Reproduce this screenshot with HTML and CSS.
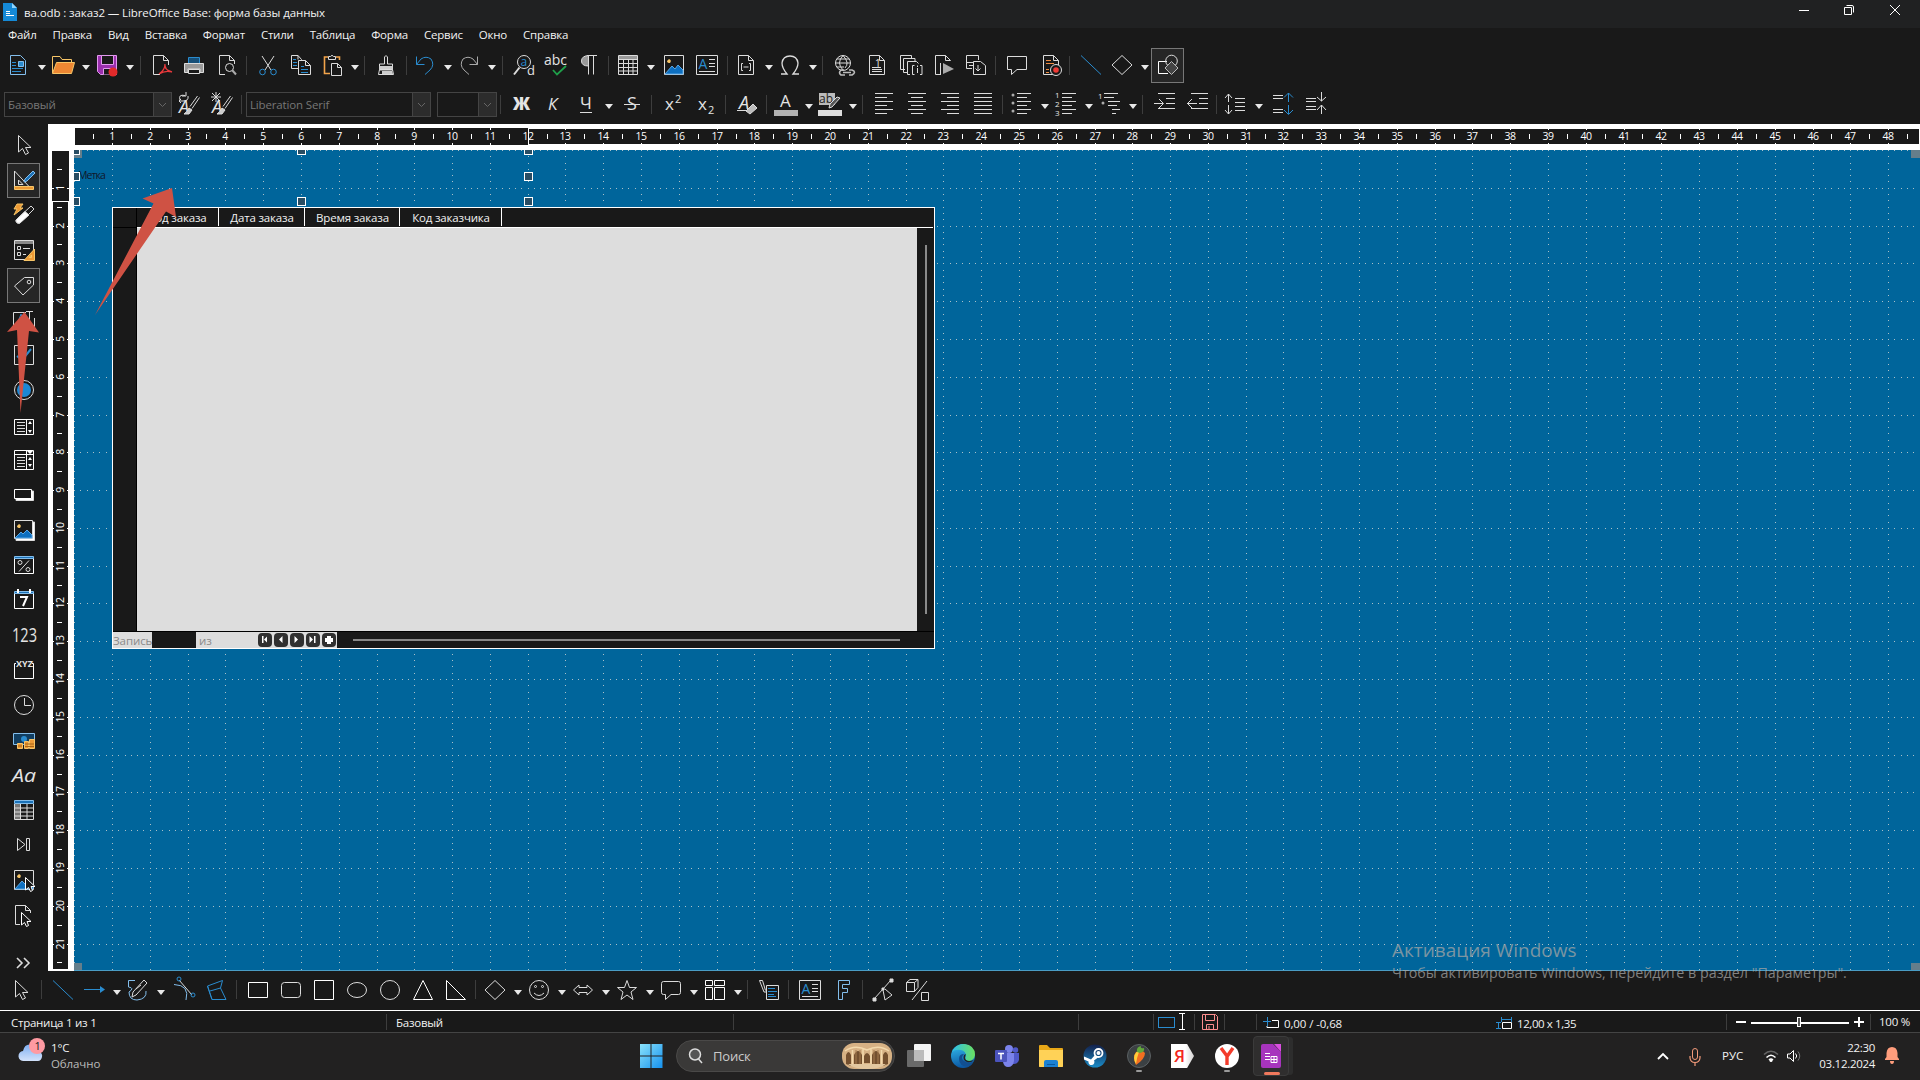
FILE: index.html
```html
<!DOCTYPE html>
<html lang="ru">
<head>
<meta charset="utf-8">
<title>ва.odb : заказ2 — LibreOffice Base: форма базы данных</title>
<link rel="stylesheet" href="styles.css">
</head>
<body>
<header class="titlebar">
  <svg class="app-icon" viewBox="0 0 14 18"><path d="M0 0H9L14 5V18H0Z" fill="#1589d6"/><path d="M9 0V5H14Z" fill="#8fd6ff"/><path d="M3 8.500H7M3 10.500H7M3 12.500H11" stroke="#fff"/></svg>
  <span class="title">ва.odb : заказ2 — LibreOffice Base: форма базы данных</span>
  <svg class="win-controls" viewBox="0 0 110 28" fill="none" stroke="#fff"><path d="M4 10.500H14"/><path d="M49.500 7.500H56.500V14.500H49.500ZM51.500 5.500H57Q58.500 5.500 58.500 7V12.500"/><path d="M95 5L105 15M105 5L95 15"/></svg>
</header>
<nav class="menubar">
  <span>Файл</span><span>Правка</span><span>Вид</span><span>Вставка</span><span>Формат</span><span>Стили</span><span>Таблица</span><span>Форма</span><span>Сервис</span><span>Окно</span><span>Справка</span>
</nav>
<div class="toolbar standard" id="standard"></div>
<div class="toolbar formatting" id="formatting"></div>
<main class="workspace">
  <aside class="sidebar" id="sidebar"></aside>
  <section class="editor">
    <svg class="ruler-h" id="rulerH" width="1872" height="26"></svg>
    <div class="editor-row">
      <svg class="ruler-v" id="rulerV" width="26" height="821"></svg>
      <div class="canvas">
        <svg class="dots" width="1846" height="821"><path id="dots"/></svg>
        <span class="label-control">Метка</span>
        <div class="form-grid">
          <div class="grid-head"><i></i><b>Код заказа</b><b>Дата заказа</b><b>Время заказа</b><b>Код заказчика</b></div>
          <div class="grid-body"><div class="row-heads"></div><div class="rows"></div><div class="vscroll"></div></div>
          <div class="grid-foot"><span class="rec">Запись</span><span class="rec-no"></span><span class="of">из</span>
            <svg class="rec-nav" width="80" height="16"><g fill="#303030"><rect x="1" y="1" width="14" height="14" rx="4"/><rect x="17" y="1" width="14" height="14" rx="4"/><rect x="33" y="1" width="14" height="14" rx="4"/><rect x="49" y="1" width="14" height="14" rx="4"/><rect x="65" y="1" width="14" height="14" rx="4"/></g><g fill="#fff"><path d="M5 4H6.500V11H5ZM7 7.500L10 4.500V10.500ZM22 7.500L25.500 4V11ZM41 7.500L37.500 4V11ZM56 7.500L52.500 4V11ZM57 4H58.500V11H57ZM70 4H74V6H76V10H74V12H70V10H68V6H70Z"/></g></svg>
            <span class="hscroll"></span></div>
        </div>
        <svg class="handles" width="1846" height="821" id="handles"></svg>
      </div>
    </div>
  </section>
</main>
<div class="toolbar drawing" id="drawing"></div>
<footer class="statusbar" id="status">
  <span class="st page">Страница 1 из 1</span>
  <span class="st style">Базовый</span>
  <span class="st blank"></span>
  <span class="st lang"></span>
  <span class="st mode"><svg width="30" height="18" fill="none"><rect x="4.500" y="4.500" width="16" height="10" stroke="#2a8ccf"/><path d="M25 .5H31M25 16.500H31M28.500 1V16" stroke="#fff"/></svg></span>
  <span class="st modified"><svg width="16" height="16" fill="none" stroke="#ff8f8f"><path d="M.5 .5H13.500L15.500 2.500V15.500H.5ZM3.500 1V6.500H12.500V1M4.500 15V10.500H11.500V15M7 12V15"/></svg></span>
  <span class="st signature"></span>
  <span class="st gap"></span>
  <span class="st pos"><svg width="16" height="12" fill="none"><path d="M0 4.500H8M4.500 0V9" stroke="#2a8ccf"/><path d="M9 3.500H15.500V10.500H4V9" stroke="#fff"/></svg>0,00 / -0,68</span>
  <span class="st size"><svg width="16" height="12" fill="none"><path d="M5.500 0V5M15.500 0V5M6 2.500H15M0 5.500H5M0 11.500H5M2.500 6V11" stroke="#2a8ccf"/><path d="M6.500 5.500H15.500V11.500H6.500Z" stroke="#fff"/></svg>12,00 x 1,35</span>
  <span class="st zoom"><svg width="130" height="16"><path d="M0 8H10M15 9H113M118 8H128M123 3V13" stroke="#fff" stroke-width="2"/><rect x="61.500" y="3.500" width="3" height="9" fill="#555" stroke="#fff"/></svg></span>
  <span class="st percent">100 %</span>
</footer>
<div class="taskbar">
  <svg class="weather" width="30" height="30"><defs><linearGradient id="cl" x2="0" y2="1"><stop stop-color="#7fb0f2"/><stop offset="1" stop-color="#d3e2fb"/></linearGradient></defs><path d="M6 24A5 5 0 0 1 5 14Q7 6 14 8Q19 9 20 14Q25 16 24 20Q23 24 20 24Z" fill="url(#cl)"/><circle cx="19" cy="9" r="8" fill="#ff9aa2"/><text x="16.500" y="13" font-size="11" fill="#222">1</text></svg>
  <div class="weather-text"><span>1°C</span><span class="dim">Облачно</span></div>
  <div class="apps">
    <svg class="start" width="24" height="24"><defs><linearGradient id="wn" x2="1" y2="1"><stop stop-color="#8be3fb"/><stop offset="1" stop-color="#1591ee"/></linearGradient></defs><path d="M1 0H11.500V11.500H1ZM12.500 0H23.500V11.500H12.500ZM1 12.500H11.500V24H1ZM12.500 12.500H23.500V24H12.500Z" fill="url(#wn)"/></svg>
    <div class="search"><svg width="18" height="18" fill="none" stroke="#ddd" stroke-width="1.500"><circle cx="9" cy="7.500" r="5.500" fill="#555"/><path d="M12.500 12L16 16"/></svg><span>Поиск</span>
      <svg class="arch" width="50" height="26" viewBox="0 0 50 26"><rect width="50" height="26" rx="12" fill="#d6b184"/><path d="M4 21V12Q6.500 6 9 12V23ZM12 24V12Q16 4 20 12V24ZM22 20V13Q25 7 28 13V20ZM30 24V12Q34 4 38 12V24ZM41 23V12Q43.500 6 46 12V21Z" fill="#74502f"/><path d="M3 8Q13 1 25 7Q37 1 47 8M10.500 7V22M21 6V22M29 6V22M39.500 7V22" stroke="#f3d9ac" stroke-width="1.500" fill="none"/><path d="M14 7V22M18 7V22M32 7V22M36 7V22" stroke="#a67c50" fill="none"/><path d="M6 21H44Q38 26 25 26Q12 26 6 21" fill="#e3c8a0"/></svg></div>
    <svg class="app" viewBox="0 0 24 24"><rect x="7" y="0" width="17" height="17" rx="1" fill="#f4f4f4"/><rect x="0" y="6" width="17" height="17" rx="1" fill="#777" opacity=".85"/><rect x="7" y="6" width="10" height="11" fill="#bbb"/></svg>
    <svg class="app" viewBox="0 0 24 24"><defs><linearGradient id="ed" y2="1" x2=".2"><stop stop-color="#35c1f1"/><stop offset="1" stop-color="#0c59a4"/></linearGradient><linearGradient id="ed2"><stop stop-color="#2ec0ea"/><stop offset="1" stop-color="#6be05f"/></linearGradient></defs><circle cx="12" cy="12" r="12" fill="url(#ed)"/><path d="M1 8Q5 0 13 0Q24 1 24 11Q23 17 17 17Q13 16 15 12Q15 7 10 6Q4 5 1 8Z" fill="url(#ed2)"/><path d="M13 10Q9 14 13 17Q18 20 22.500 17.500Q21 21 17 23Q8 22 8 15Q8 10 13 10Z" fill="#124f91"/><path d="M15 10Q13 14 15 16Q18 18 23 16Q20 19 16 18Q11 16 13 11Z" fill="#232323"/></svg>
    <svg class="app" viewBox="0 0 24 24"><circle cx="14" cy="5" r="4" fill="#7b83eb"/><circle cx="20.500" cy="6" r="2.800" fill="#5059c9"/><path d="M16 9H24V16Q23 20 19 20H16Z" fill="#5059c9"/><path d="M8 9H19V17Q18 23 13 23Q9 23 8 18Z" fill="#7b83eb"/><rect y="6" width="12" height="12" rx="1" fill="#4b53bc"/><path d="M3 9.500H9M6 9.500V15.500" stroke="#fff" stroke-width="1.500"/></svg>
    <svg class="app" viewBox="0 0 24 24"><path d="M0 2Q0 1 1 1H8L11 4H23Q24 4 24 5V22Q24 23 23 23H1Q0 23 0 22Z" fill="#e9a817"/><path d="M0 6H24V22Q24 23 23 23H1Q0 23 0 22Z" fill="#ffd257"/><path d="M5 23V18Q5 16 7 16H17Q19 16 19 18V23Z" fill="#1c81d2"/><path d="M8 20H16V21H8Z" fill="#0a5aa0"/></svg>
    <svg class="app" viewBox="0 0 24 24"><defs><linearGradient id="sm" y2="1" x2="0"><stop stop-color="#13204b"/><stop offset="1" stop-color="#1b8cc7"/></linearGradient></defs><circle cx="12" cy="12" r="11.500" fill="url(#sm)"/><circle cx="15.500" cy="9" r="4" fill="none" stroke="#fff" stroke-width="1.800"/><circle cx="15.500" cy="9" r="2" fill="#fff"/><path d="M1 12.500L8 15.500L12 11L15 13.500L11 16.500A3 3 0 1 1 5.500 17.500L1 15.500Z" fill="#fff"/></svg>
    <svg class="app on" viewBox="0 0 24 28"><circle cx="12" cy="12" r="11.500" fill="#3b4043" stroke="#5b6063"/><path d="M9 21Q5 13 9 8Q15 5 18 9Q18 15 9 21Z" fill="#f26f21"/><path d="M9 20Q5 13 9.500 8L12 8Q10 13 9 20" fill="#ffcf3a"/><path d="M10 8Q9 3 14 2Q13 5 17 4Q18 8 13 9Z" fill="#63a83b"/><rect x="9" y="26" width="6" height="2" rx="1" fill="#9a9a9a"/></svg>
    <div class="yandex"><span>Я</span></div>
    <svg class="app on" viewBox="0 0 24 28"><circle cx="12" cy="12" r="12" fill="#fff"/><path d="M6 4L12 12V21M18 4L12 12.500" stroke="#f33b2b" stroke-width="3.400" fill="none"/><rect x="9" y="26" width="6" height="2" rx="1" fill="#9a9a9a"/></svg>
    <div class="active-app"><svg width="20" height="24"><path d="M2 0H12L20 8V22Q20 24 18 24H2Q0 24 0 22V2Q0 0 2 0Z" fill="#a734bd"/><path d="M13 0H20V8Z" fill="#da4fe0"/><path d="M4 9.500H9M4 12.500H9M4 15.500H9M10 12.500H16V18.500H10ZM10 15.500H16M13 13V18" stroke="#fff" fill="none"/></svg></div>
  </div>
  <div class="tray">
    <svg width="190" height="32" fill="none"><path d="M8 19L13 14L18 19" stroke="#fff" stroke-width="1.800"/><rect x="42.500" y="8.500" width="5" height="11" rx="2.500" stroke="#f29a7a"/><path d="M40 16V18Q40.500 22.500 45 22.500Q49.500 22.500 50 18V16M45 23V26" stroke="#f29a7a" stroke-width="1.200"/><g stroke="#fff" stroke-width="1.500"><path d="M114 14.500Q121 8 128 14.500" stroke="#666"/><path d="M116.500 17.500Q121 13 125.500 17.500M119 20Q121 18 123 20"/></g><circle cx="121" cy="20.500" r="1.500" fill="#fff"/><path d="M137.500 14H140L143.500 10.500V21.500L140 18H137.500Z" stroke="#fff"/><path d="M145.500 13.500Q148 16 145.500 18.500" stroke="#fff"/><path d="M148 11.500Q151.500 16 148 20.500" stroke="#777"/></svg>
    <span class="lang-ind">РУС</span>
    <div class="clock"><span>22:30</span><span>03.12.2024</span></div>
    <svg class="bell" width="16" height="20"><path d="M1 14V13L2.500 11V7Q3 1 8 1Q13 1 13.500 7V11L15 13V14ZM6 15H10Q10 18 8 18Q6 18 6 15Z" fill="#ff9d7c"/></svg>
  </div>
</div>
<div class="watermark"><p class="wm-title">Активация Windows</p><p class="wm-text">Чтобы активировать Windows, перейдите в раздел "Параметры".</p></div>
<svg class="pointers" width="200" height="430"><g fill="#cf5244"><path d="M95 315L153.500 203.500L142.500 198.500L172 188L176 217L166 211.500Z"/><path d="M20.500 413L17 330L7 332L24.500 312L39 332.500L29 331Z"/></g></svg>
<script src="app.js"></script>
</body>
</html>
```
FILE: styles.css
```css
* { box-sizing: border-box; }
body { margin: 0; width: 1920px; height: 1080px; overflow: hidden; display: flex; flex-direction: column; background: #191919; color: #f2f2f2; font: 11.5px "Open Sans", "Noto Sans", sans-serif; position: relative; }
svg { display: block; flex: none; }
.titlebar { height: 28px; flex: none; background: #202122; display: flex; align-items: center; padding: 0 15px 4px 3px; }
.app-icon { width: 14px; height: 18px; }
.title { margin-left: 7px; white-space: nowrap; letter-spacing: -.1px; }
.win-controls { width: 110px; height: 28px; margin-left: auto; margin-top: 3px; }
.menubar { height: 19px; flex: none; display: flex; align-items: flex-start; line-height: 14px; gap: 16px; padding: 0 8px; letter-spacing: -.22px; }
.toolbar { display: flex; flex: none; align-items: center; }
.toolbar > * { flex: none; }
.standard { height: 36px; }
.formatting { height: 41px; padding-top: 1px; }
.drawing { height: 39px; padding-bottom: 2px; }
.icon { width: 24px; height: 24px; overflow: visible; fill: none; stroke: #dcdcdc; stroke-width: 1; }
.icon text { stroke: none; fill: #e4e4e4; }
.boxed { width: 33px; height: 35px; border: 1px solid #777; background: #262626; display: flex; align-items: center; justify-content: center; }
.sep { width: 1px; height: 19px; background: #3d3d3d; }
.dd { width: 8px; height: 10px; fill: #e8e8e8; }
.combo { height: 25px; border: 1px solid #444; display: flex; justify-content: space-between; color: #777; line-height: 23px; padding-left: 3px; background: #191919; letter-spacing: -.15px; }
.combo svg { width: 18px; height: 23px; background: #2c2c2c; border-left: 1px solid #444; fill: none; stroke: #666; }
.workspace { flex: none; height: 847px; display: flex; }
.sidebar { width: 48px; flex: none; display: flex; flex-direction: column; align-items: center; padding-right: 1px; }
.sidebar > * { flex: none; }
.editor { flex: 1; background: #fff; display: flex; flex-direction: column; }
.editor-row { display: flex; height: 821px; }
.ruler-num { fill: #fff; font-size: 10.5px; text-anchor: middle; letter-spacing: -.4px; }
.canvas { position: relative; flex: 1; background: #00659b; overflow: hidden; border-bottom: 1px solid #4a9cc4; }
.dots, .handles { position: absolute; left: 0; top: 0; }
.dots path { stroke: #a9c0c9; stroke-width: 1; shape-rendering: crispEdges; }
.label-control { position: absolute; left: 4px; top: 18px; font-size: 10.5px; letter-spacing: -.9px; color: #10162a; }
.form-grid { position: absolute; left: 38px; top: 57px; width: 823px; height: 442px; border: 1px solid #fff; background: #191919; display: flex; flex-direction: column; }
.grid-head { height: 20px; display: flex; border-bottom: 1px solid #fff; line-height: 20px; text-align: center; margin-right: 1px; }
.grid-head i { width: 24px; border-right: 1px solid #000; border-bottom: 1px solid #000; height: 20px; }
.grid-head b { font-weight: 400; border-right: 1px solid #fff; height: 18px; letter-spacing: -.18px; padding-left: 1px; }
.grid-head b:nth-child(2) { width: 82px; padding-left: 0; }
.grid-head b:nth-child(3) { width: 86px; }
.grid-head b:nth-child(4) { width: 95px; }
.grid-head b:nth-child(5) { width: 102px; }
.grid-body { flex: 1; display: flex; border-bottom: 1px solid #000; }
.row-heads { width: 24px; border-right: 1px solid #000; }
.rows { flex: 1; background: #ddd; }
.vscroll { width: 17px; position: relative; }
.vscroll::after { content: ""; display: block; width: 2px; height: 369px; background: #8a8a8a; margin: 17px 0 0 8px; }
.grid-foot { height: 16px; display: flex; background: #ddd; color: #8a8a8a; line-height: 17px; letter-spacing: -.1px; }
.rec { width: 39px; }
.rec-no { width: 44px; background: #191919; }
.of { width: 61px; padding-left: 3px; }
.hscroll { flex: 1; background: #191919; padding: 7px 34px 0 16px; }
.hscroll::after { content: ""; display: block; height: 2px; background: #8a8a8a; }
.statusbar { height: 23px; flex: none; border-top: 1px solid #fff; border-bottom: 1px solid #444; display: flex; align-items: center; letter-spacing: -.25px; }
.st { height: 16px; border-right: 1px solid #3d3d3d; display: flex; align-items: center; white-space: nowrap; }
.page { width: 387px; padding-left: 11px; padding-top: 1px; }
.style { width: 347px; padding-left: 9px; padding-top: 1px; }
.blank { width: 345px; }
.lang { width: 75px; }
.mode { width: 41px; }
.mode svg { overflow: visible; }
.modified { width: 30px; padding-left: 7px; }
.signature { width: 30px; border: 0; }
.gap { width: 2px; }
.pos { width: 239px; padding-left: 6px; gap: 5px; border: 0; padding-top: 3px; letter-spacing: -.1px; }
.size { width: 231px; gap: 5px; padding-top: 3px; letter-spacing: -.4px; }
.zoom { width: 144px; padding-left: 9px; }
.percent { border: 0; padding: 0 0 0 8px; }
.taskbar { height: 48px; flex: none; background: #222121; display: flex; align-items: flex-start; }
.weather { margin: 4px 0 0 18px; }
.weather-text { display: flex; flex-direction: column; line-height: 16px; margin: 7px 0 0 3px; width: 588px; letter-spacing: -.1px; }
.dim { color: #bbb; }
.apps { display: flex; align-items: center; height: 46px; width: 1011px; }
.search { width: 219px; height: 32px; border-radius: 16px; background: #3a3938; border: 1px solid #4a4948; margin: 0 12px 0 13px; display: flex; align-items: center; padding: 0 2px 0 9px; color: #ccc; font-size: 13px; gap: 9px; }
.search span { letter-spacing: -.2px; }
.arch { margin-left: auto; }
.app { width: 24px; height: 24px; margin-right: 20px; }
.on { height: 28px; margin-top: 4px; }
.yandex { width: 23px; height: 24px; margin-right: 21px; background: linear-gradient(90deg, #fff 62%, #d4d2d2); clip-path: polygon(0 0, 70% 0, 100% 50%, 70% 100%, 0 100%); color: #f3261b; font-size: 17px; font-weight: 600; line-height: 24px; padding-left: 3px; }
.active-app { width: 36px; height: 40px; background: #2f2e2e; border: 1px solid #3b3b3b; border-radius: 4px; margin-left: -6px; display: flex; align-items: center; justify-content: center; box-shadow: 5px 0 0 -1px #2d2d2d; position: relative; }
.active-app::after { content: ""; position: absolute; bottom: 0; left: 10px; width: 16px; height: 3px; border-radius: 2px; background: #f0795d; }
.tray { display: flex; position: relative; height: 46px; align-items: center; width: 250px; }
.lang-ind { position: absolute; left: 72px; top: 15px; }
.clock { display: flex; flex-direction: column; text-align: right; line-height: 16px; width: 67px; margin-left: -32px; letter-spacing: -.3px; }
.bell { margin-left: 9px; }
.watermark { position: absolute; left: 1392px; top: 937px; color: rgba(165,165,165,.75); white-space: nowrap; }
.watermark p { margin: 0; }
.wm-title { font-size: 19px; line-height: 27px; }
.wm-text { font-size: 14.300px; line-height: 17px; }
.pointers { position: absolute; left: 0; top: 0; }
```
FILE: app.js
```js
const page = '<path d="M4.500 2.500H14.500L19.500 7.500V21.500H4.500Z M14.500 2.500V7.500H19.500"/>';
const B = 'stroke="#2a8ccf"', L = 'stroke="#83beec"', O = 'fill="#ed9a36" stroke="#f7c567"';
const lines = (a) => `<path d="${a.map(([x, y, w]) => `M${x} ${y}.500h${w}`).join('')}"/>`;
const picture = '<path d="M2.500 2.500H21.500V21.500H2.500Z"/><path d="M3 21L10 13L13 16L16 12L21 17V21Z" fill="#0d6fc0" stroke="#58a6e4"/><path d="M7 6Q10 7 8 10Q5 10 5 8Z" fill="#f7c567" stroke="none"/>';
const cursor = 'M6.500 2.500V19L10.500 15.500L13.500 21.500L16.500 20L13.500 14.500H19Z';
const icons = {
  doc: `<path ${L} d="M3.500 2.500H13.500L18.500 7.500V21.500H3.500Z"/><path ${B} d="M5 9.500H9M5 12.500H9M5 15.500H16M5 18.500H14"/><path fill="#2a8ccf" stroke="#83beec" d="M11.500 8.500H16.500V13.500H11.500Z"/>`,
  open: `<path d="M1.500 20V3.500H9L11 6.500H20.500V9" stroke="#f7c567"/><path fill="#ed8733" stroke="#f7c567" d="M1.500 20.500L5.500 9.500H23.500L20.500 20.500Z"/>`,
  save: `<path d="M2.500 2.500H21.500V21.500H5.500L2.500 18.500Z" fill="#9b2fae" stroke="#e29aee"/><path fill="#191919" stroke="#e29aee" d="M6.500 2.500H18.500V11.500H6.500ZM8.500 21.500V15.500H17V21.500"/><circle cx="18" cy="19" r="4.500" fill="#e22a2a" stroke="none"/>`,
  pdf: `<path d="M3.500 2.500H13.500L18.500 7.500V12M3.500 2.500V21.500H10M13.500 2.500V7.500H18.500"/><path stroke="#e8393c" stroke-width="1.300" d="M9 21Q15 17 15 11Q14 17 22 19Q15 17 9 21"/>`,
  print: `<path ${B} fill="#164f78" d="M6.500 4.500H17.500V11H6.500Z"/><path fill="#999" stroke="#ddd" d="M2.500 10.500H21.500V19.500H18V16H6V19.500H2.500Z"/><path d="M6.500 16.500H17.500V20.500H6.500Z" fill="#191919"/>`,
  preview: `<path d="M9 21.500H3.500V2.500H13.500L18.500 7.500V11M13.500 2.500V7.500H18.500"/><circle cx="13.500" cy="14.500" r="4"/><path stroke-width="2" stroke="#aaa" d="M16.500 17.500L20 21.500"/>`,
  cut: `<path d="M6 3L15 17M18 3L9 17"/><g ${B}><circle cx="6.500" cy="19" r="2.800"/><circle cx="17.500" cy="19" r="2.800"/></g>`,
  copy: `<path d="M9 15.500H2.500V2.500H9L12.500 6.500V8M9 2.500V6.500"/><path d="M9.500 7.500H16.500L21.500 12.500V21.500H9.500ZM16.500 7.500V12.500H21.500"/><path ${B} d="M4 6.500H7M4 9.500H8M4 12.500H8M12 13.500H15M12 16.500H19M12 19.500H19"/>`,
  paste: `<path stroke="#f2a44b" stroke-width="1.600" d="M7 4H3.500V20.500H9M15 4H18.500V7"/><path d="M7.500 6.500V3.500H9.500Q11 1 12.500 3.500H14.500V6.500Z"/><path d="M10.500 10.500H16.500L20.500 14.500V22.500H10.500ZM16.500 10.500V14.500H20.500"/>`,
  brush: `<path d="M10.500 11V4Q12 1 13.500 4V11H18.500V16.500H5.500V11ZM5.500 16.500L4.500 21.500H19.500L18.500 16.500M5 17H19"/><path fill="#ccc" stroke="none" d="M5.500 13H18.500V16H5.500ZM8 18H18L19 21H8Z"/>`,
  undo: `<path ${B} d="M3.500 3.500V11.500H11.500M3.500 11.500L8 6Q13 2.500 18 6Q22 12 17 17L12 21.500"/>`,
  redo: `<path stroke="#aaa" d="M20.500 3.500V11.500H12.500M20.500 11.500L16 6Q11 2.500 6 6Q2 12 7 17L12 21.500"/>`,
  find: `<circle cx="12" cy="9" r="6.500"/><path stroke-width="2" d="M7.500 14.500L2 21.500"/><text x="8.500" y="13" font-size="12" style="fill:#2a8ccf">a</text><text x="15" y="22" font-size="13">d</text>`,
  abc: `<text x="0" y="12" font-size="14" textLength="23">abc</text><path stroke="#1fa04a" stroke-width="1.800" d="M9 17L13 21.500L22 13"/>`,
  pilcrow: `<path d="M11 2.500H21M12.500 3V21.500M17.500 3V21.500"/><path fill="#999" d="M12.500 3V13Q5.500 13 5.500 8Q5.500 3 12.500 2.500Z"/>`,
  table: `<path d="M2.500 2.500H21.500V21.500H2.500ZM2.500 6.500H21.500M2.500 10.500H21.500M2.500 14.500H21.500M2.500 18H21.500M7.500 6V21M12.500 6V21M17 6V21"/><path fill="#999" stroke="none" d="M3 3H21V6H3Z"/>`,
  picture,
  textbox: `<path d="M1.500 2.500H22.500V21.500H1.500Z"/><text x="3.500" y="16" font-size="14" style="fill:#2a8ccf">A</text>` + lines([[14, 6, 6], [14, 10, 6], [14, 13, 6], [4, 18, 16]]),
  field: page + '<path d="M9 10.500H7.500V17.500H9M15 10.500H16.500V17.500H15M9.500 14H14.500"/>',
  omega: `<path stroke-width="1.300" d="M3 21H9Q4 15 4 10Q5 3 12 3Q19 3 20 10Q20 15 15 21H21"/>`,
  link: `<circle cx="11" cy="10" r="7.500"/><path d="M3.500 10H18.500M5 6H17M5 14H12M11 2.500Q4 10 11 17M11 2.500Q18 10 13 15"/><path stroke-width="1.600" stroke="#bbb" d="M13 22H9Q6 20 9 17H12M17 17H20Q25 19 20 22H17M11 19.500H19"/>`,
  footnote: page + '<text x="10" y="14" font-size="10">1</text>' + lines([[7, 14, 9], [7, 16, 10], [7, 18, 10]]),
  endnote: `<path d="M6 16.500H1.500V2.500H12.500V5M9 19.500H4.500V5.500H16V8M11 21.500H8.500V8.500H17.500L19.500 10.500"/><path d="M15.500 12.500H13.500V21.500H15.500M21 12.500H23V21.500H21M18.500 15V20M18.500 12.500V14"/>`,
  bookmark: `<path d="M9 21.500H4.500V2.500H14.500L19.500 7.500M14.500 2.500V7.500H19.500M9.500 10V22"/><path fill="#aaa" stroke="none" d="M12 10L23 16L12 21Z"/>`,
  crossref: `<path d="M8 15.500H2.500V2.500H14.500V7M2.500 9.500H9M9.500 8.500H16.500L21.500 12.500V21.500H9.500ZM14 12V17M11.500 15.500L14 18L16.500 15.500M5 12.500H10"/>`,
  comment: `<path d="M2.500 3.500H21.500V16.500H12L6.500 21.500V16.500H2.500Z"/>`,
  track: page + `<path stroke="#f08b40" d="M7 7.500H12M7 10.500H15M7 16.500H10M7 19.500H10"/><circle cx="17" cy="17" r="5.500" fill="#191919"/><circle cx="17" cy="17" r="2.800" fill="#ee3a35" stroke="none"/>`,
  line: `<path ${B} d="M2 2.500L22 21.500"/>`,
  diamond: '<path d="M12 2.500L22 12L12 21.500L2 12Z"/>',
  shapes: `<path stroke="#fff" d="M11 8.500H2.500V20.500H12"/><circle cx="15.500" cy="8" r="5.800"/><path fill="#444" stroke="#bbb" d="M15.500 8.500L22 15L15.500 21.500L9 15Z"/>`,
  restyle: `<path d="M3 8Q1 2 8 3.500M9 0V4H5M11 4Q12 9 6 9H2M4 7L2 9L4 11"/><text x="2" y="21" font-size="18" font-style="italic">A</text><path d="M22.500 5.500L15 16.500M20.500 4L13 14.500"/><path fill="#ccc" d="M12 16L15 18L12 22H7Q10 20 12 16Z"/>`,
  newstyle: `<path d="M6 0V10M1 5H11M2 1L10 9M10 1L2 9"/><text x="2" y="21" font-size="18" font-style="italic">A</text><path d="M22.500 5.500L15 16.500M20.500 4L13 14.500"/><path fill="#ccc" d="M12 16L15 18L12 22H7Q10 20 12 16Z"/>`,
  bold: '<text x="4" y="18" font-size="17" font-weight="800" textLength="17" lengthAdjust="spacingAndGlyphs">Ж</text>',
  italic: '<text x="6" y="18" font-size="17" font-style="italic">К</text>',
  under: '<text x="6" y="17" font-size="17">Ч</text><path d="M6 20.500H18"/>',
  strike: '<text x="7" y="18" font-size="18">S</text><path d="M4 12.500H20"/>',
  sup: '<text x="4" y="18" font-size="17">x</text><text x="14" y="11" font-size="11">2</text>',
  sub: '<text x="4" y="18" font-size="17">x</text><text x="14" y="22" font-size="11">2</text>',
  clear: '<text x="4" y="17" font-size="18" font-style="italic">A</text><path d="M2 18.500H11"/><path fill="#bbb" d="M18 12L22 16L15 22L11 19Z"/>',
  color: '<text x="6" y="15" font-size="17">A</text><path stroke="none" fill="#b2b2b2" d="M0 18H24V24H0Z"/>',
  hilite: '<path fill="#bbb" stroke="none" d="M1 1H17V13H1Z"/><text x="1" y="11" font-size="12" style="fill:#222">ab</text><path fill="#555" d="M22 6L14 15L11 16L12 12L19 5Z"/><path stroke="none" fill="#ddd" d="M0 18H24V24H0Z"/>',
  left: lines([[3, 1, 18], [3, 5, 12], [3, 9, 18], [3, 13, 12], [3, 17, 18], [3, 21, 12]]),
  center: lines([[3, 1, 18], [6, 5, 12], [3, 9, 18], [6, 13, 12], [3, 17, 18], [6, 21, 12]]),
  right: lines([[3, 1, 18], [9, 5, 12], [3, 9, 18], [9, 13, 12], [3, 17, 18], [9, 21, 12]]),
  justify: lines([[3, 1, 18], [3, 5, 18], [3, 9, 18], [3, 13, 18], [3, 17, 18], [3, 21, 18]]),
  bullets: lines([[8, 1, 14], [8, 5, 10], [8, 9, 14], [8, 13, 10], [8, 17, 14], [8, 21, 10]]) + '<g fill="#aaa" stroke="none"><circle cx="4" cy="3" r="1.500"/><circle cx="4" cy="11" r="1.500"/><circle cx="4" cy="19" r="1.500"/></g>',
  numbers: lines([[8, 1, 14], [8, 5, 10], [8, 9, 14], [8, 13, 10], [8, 17, 14], [8, 21, 10]]) + '<g font-size="8"><text x="1" y="6">1</text><text x="1" y="15">2</text><text x="1" y="24">3</text></g>',
  outline: lines([[6, 1, 14], [6, 5, 10], [10, 9, 12], [10, 13, 9], [14, 17, 8], [14, 21, 4]]) + '<text x="0" y="7" font-size="8">1</text><circle cx="5" cy="11" r="1.500" fill="#aaa" stroke="none"/>',
  indent: lines([[6, 1, 17], [14, 6, 9], [14, 11, 9], [6, 16, 17]]) + '<path d="M2 11.500H11M7 7L11.500 11.500L7 16"/>',
  outdent: lines([[6, 1, 17], [14, 6, 9], [14, 11, 9], [6, 16, 17]]) + '<path d="M2 11.500H12M7 7L2.500 11.500L7 16"/>',
  spacing: lines([[12, 6, 10], [12, 10, 10], [12, 14, 10], [12, 18, 10]]) + '<path d="M5.500 2V10M2 6L5.500 2L9 6M5.500 13V22M2 18L5.500 22L9 18"/>',
  parinc: lines([[2, 3, 10], [2, 6, 10], [2, 17, 10], [2, 20, 10]]) + `<path ${B} d="M17.500 1V10M13 5.500L17.500 1L22 5.500M17.500 13V22M13 18L17.500 22.500L22 18"/>`,
  pardec: lines([[2, 6, 10], [2, 9, 10], [2, 14, 10], [2, 17, 10]]) + '<path d="M17.500 0V9M13 5L17.500 9L22 5M17.500 13V22M13 18L17.500 13L22 18"/>',
  pointer: `<path d="${cursor}"/>`,
  design: `<path d="M2.500 2V18.500H18ZM6.500 11V15.500H11Z"/><path fill="#1c72b8" ${L} d="M21 2L23 4L15 12L12 13L13 10Z"/><path ${O} d="M2.500 17.500H21.500V20.500H2.500Z"/>`,
  wizard: `<path ${O} d="M5 2H11L8 6H11L2 13L5 7H2Z"/><path d="M19 4L22 7L8 21Q4 22 4 18Z"/><path fill="#fff" d="M13 9.500L17 13L8 21Q4 22 4 18Z"/>`,
  props: `<path d="M2.500 2.500H21.500V21.500H2.500Z"/><path fill="#888" stroke="none" d="M3 3H21V6H3Z"/><path d="M5.500 8.500H8.500V11.500H5.500ZM5.500 14.500H8.500V17.500H5.500ZM11 10.500H18M11 16.500H14"/><path ${O} d="M22.500 11V22.500H12ZM19.500 17V19.500H17Z"/>`,
  tag: `<path d="M2.500 12L12.500 3.500H21.500V11L11 21Z"/><circle cx="17" cy="8" r="1.800"/>`,
  edit: `<path d="M14 4.500H1.500V19.500H22.500V10M14 3.500H21M17.500 4V19M15 19.500H20"/><path ${B} d="M6 14L9 6L12 14"/>`,
  check: `<path d="M2.500 2.500H21.500V21.500H2.500Z"/><path ${B} stroke-width="2" d="M5 13L10 17L19 6"/>`,
  radio: `<circle cx="12" cy="12" r="9.500"/><circle cx="12" cy="12" r="7" fill="#1c88d4" stroke="none"/>`,
  list: '<path stroke="#fff" d="M2.500 4.500H21.500V19.500H2.500ZM14.500 4V20"/>' + lines([[5, 7, 8], [5, 10, 8], [5, 13, 8], [5, 16, 8]]) + '<path fill="#fff" stroke="none" d="M16 9L18 6L20 9ZM16 15H20L18 18Z"/>',
  combobox: '<path stroke="#fff" d="M2.500 2.500H21.500V21.500H2.500ZM14.500 2V21M2 6.500H21"/>' + lines([[5, 9, 8], [5, 12, 8], [5, 15, 8], [5, 18, 8]]) + '<path fill="#fff" stroke="none" d="M15 3H21L18 6ZM16 12L18 9L20 12ZM16 16H20L18 19Z"/>',
  button: '<path fill="#fff" d="M4 8H21.500V17.500H4Z"/><path fill="#191919" stroke="#fff" d="M2.500 6.500H19.500V15.500H2.500Z"/>',
  imgbutton: '<path fill="#fff" d="M4 4H22.500V22.500H4Z"/><path fill="#191919" d="M2.500 2.500H20.500V20.500H2.500Z"/><path fill="#0d6fc0" stroke="#58a6e4" d="M3 20L9 14L11 16L15 12L20 17V20Z"/><path d="M7 6Q10 7 8 10Q5 10 5 8Z" fill="#f7c567" stroke="none"/>',
  percent: `<path stroke="#fff" d="M2.500 5V20.500H21.500V5"/><path fill="#1c72b8" ${L} d="M2.500 3.500H21.500V5.500H2.500Z"/><path d="M7 18.500L17 7.500"/><circle cx="8" cy="9.500" r="2"/><circle cx="16" cy="16.500" r="2"/>`,
  date: `<path stroke="#fff" d="M2.500 5V21.500H21.500V5"/><path fill="#1c72b8" ${L} d="M2.500 4.500H21.500V6.500H2.500Z"/><path stroke="#fff" stroke-width="2" d="M6 2V6M18 2V6M8 10H15L11 19"/>`,
  num: '<text x="0" y="19" font-size="20" font-weight="400" textLength="25" lengthAdjust="spacingAndGlyphs">123</text>',
  pattern: '<path stroke="#fff" d="M4 6.500H2.500V21.500H21.500V6.500H20"/><text x="4" y="9.500" font-size="9" font-weight="700" textLength="17">XYZ</text>',
  clock: '<circle cx="12" cy="12" r="9.500"/><path d="M12.500 5V12.500H19"/>',
  money: `<path ${L} fill="#113e61" d="M1.500 4.500H22.500V15.500H1.500Z"/><circle cx="12" cy="10" r="3" fill="#2a8ccf" stroke="none"/><g ${O}><path d="M5.500 14.500H10.500V19.500H5.500ZM12.500 12.500H16.500V19.500H12.500ZM17.500 10.500H22.500V19.500H17.500Z"/></g><path stroke="#a66518" d="M6 17H10M13 15H22M13 17.500H22"/>`,
  aa: '<text x="0" y="18" font-size="18" font-weight="500" font-style="italic" textLength="24" lengthAdjust="spacingAndGlyphs">Aa</text>',
  gridctl: `<path fill="#777" stroke="none" d="M3 6H8V21H3Z"/><path d="M2.500 6V21.500H21.500V6M3 10H21M3 14H21M3 18H21M8.500 6V21M15 6V21"/><path fill="#1c72b8" ${L} d="M2.500 2.500H21.500V5.500H2.500Z"/>`,
  navbar: '<path d="M5.500 5.500L13 11.500L5.500 17.500ZM14.500 5.500H17.500V17.500H14.500Z"/>',
  imgctl: picture + '<path fill="#191919" stroke="#fff" d="M13.500 9.500V22L16.500 19.500L18.500 23.500L20.500 22.500L19 18.500H23Z"/>',
  filectl: `<path d="M8 21.500H3.500V2.500H13.500L18.500 7.500V10M13.500 2.500V7.500H18.500"/><path fill="#191919" stroke="#fff" d="M9.500 9.500V22L12.500 19.500L14.500 23.500L16.500 22.500L15 18.500H19Z"/>`,
  more: '<path stroke-width="1.600" d="M5 8L10 13L5 18M12 8L17 13L12 18"/>',
  arrow: `<path ${B} d="M2 11.500H21"/><path fill="#2a8ccf" stroke="none" d="M18 8L23 11.500L18 15Z"/>`,
  curve: `<path ${L} d="M9 2.500H2.500V9Q9 10 3 14Q3 22 11 22Q21 21 20 13"/><path d="M18 2L21 5L10 17L6 19L7 14Z M10 11L15 7"/>`,
  bezier: `<path ${L} d="M2 6.500Q18 7 14 22"/><path stroke="#ddd" d="M7 2L20 17"/><circle ${B} cx="7" cy="1" r="2"/><circle ${B} cx="21" cy="17" r="2"/>`,
  polygon: `<path ${B} d="M2.500 8L17.500 2.500L15.500 10L21 21.500H7ZM2.500 8L7 21.500M5 13L15.500 10"/>`,
  rect: '<path stroke="#fff" d="M2.500 4.500H21.500V19.500H2.500Z"/>',
  round: '<rect x="2.500" y="4.500" width="19" height="15" rx="3"/>',
  square: '<path stroke="#fff" d="M2.500 2.500H21.500V21.500H2.500Z"/>',
  ellipse: '<ellipse cx="12" cy="12" rx="9.500" ry="7.500"/>',
  circle: '<circle cx="12" cy="12" r="9.500"/>',
  tri: '<path stroke="#fff" d="M12 2.500L21.500 21.500H2.500Z"/>',
  rtri: '<path stroke="#fff" d="M2.500 2.500L21.500 21.500H2.500Z"/>',
  smile: '<circle cx="12" cy="12" r="9.500"/><path d="M7 15Q12 20 17 15"/><g><circle cx="8.500" cy="8.500" r="1"/><circle cx="15.500" cy="8.500" r="1"/></g>',
  dbl: '<path d="M2.500 12L8 7V9.500H16V7L21.500 12L16 17V14.500H8V17Z"/>',
  star: '<path d="M12 2.500L14.500 9.500H21.500L16 14L18 21.500L12 17L6 21.500L8 14L2.500 9.500H9.500Z"/>',
  callout: '<path d="M4.500 3.500H19.500Q21.500 3.500 21.500 5.500V14.500Q21.500 16.500 19.500 16.500H12L6.500 21.500V16.500H4.500Q2.500 16.500 2.500 14.500V5.500Q2.500 3.500 4.500 3.500Z"/>',
  flow: '<path stroke="#fff" d="M2.500 2.500H9.500V7.500H2.500ZM11.500 2.500H21.500V7.500H11.500ZM2.500 9.500H9.500V21.500H2.500ZM11.500 9.500H21.500V21.500H11.500Z"/>',
  callout2: `<path d="M2.500 2.500H5.500L8.500 12.500M2.500 2.500L7 14H9.500M9.500 7.500H21.500V21.500H9.500Z"/><path ${B} d="M11 10.500H18M11 13.500H20M11 16.500H17M11 18.500H19"/>`,
  fontwork: `<path ${L} d="M7.500 2.500H18.500V6.500H11.500V10.500H16.500V14.500H11.500V21.500H7.500Z"/>`,
  points: '<path d="M2 21L11 11L19 2M11 12L13 22L20 17L13 11"/><path fill="#ddd" d="M1 20H4V23H1ZM18 1H21V4H18ZM10 10H12V12H10Z"/>',
  extrude: '<path d="M1.500 4.500H9.500V13.500H1.500ZM1.500 4.500L5 1.500H13V9.500L9.500 13.500M9.500 4.500L13 1.500M7 22L22 3M16.500 14.500H23.500V22.500H16.500Z"/>'
};
const sizes = { sep: 1, dd: 8, comboStyle: 168, comboFont: 185, comboSize: 60 };
const chevron = '<svg viewBox="0 0 17 23"><path d="M5 10L8.500 13.500L12 10"/></svg>';
const combo = (w, t) => `<div class="combo" style="width:${w}px"><span>${t}</span>${chevron}</div>`;
function markup(name, boxed) {
  if (name === 'sep') return '<span class="sep"></span>';
  if (name === 'dd') return '<svg class="dd" viewBox="0 0 8 10"><path d="M0 5H8L4 10Z"/></svg>';
  if (name === 'comboStyle') return combo(168, 'Базовый');
  if (name === 'comboFont') return combo(185, 'Liberation Serif');
  if (name === 'comboSize') return combo(60, '');
  const svg = `<svg class="icon" viewBox="0 0 24 24">${icons[name]}</svg>`;
  return boxed ? `<div class="boxed">${svg}</div>` : svg;
}
// Each entry is "name centre"; a leading "*" marks a pressed button.
function build(id, spec, vertical, start = 0) {
  const host = document.getElementById(id);
  let edge = start;
  for (const item of spec.split(',')) {
    let [name, c] = item.trim().split(' ');
    const boxed = name[0] === '*';
    if (boxed) name = name.slice(1);
    const w = boxed ? (vertical ? 35 : 33) : sizes[name] || 24;
    const from = Math.round(c - w / 2);
    host.insertAdjacentHTML('beforeend', markup(name, boxed));
    host.lastElementChild.style[vertical ? 'marginTop' : 'marginLeft'] = from - edge + 'px';
    edge = from + w;
  }
}
build('standard', 'doc 19,dd 42,open 63,dd 86,save 107,dd 130,sep 140,pdf 162,print 194,preview 228,sep 246,cut 268,copy 301,paste 333,dd 355,sep 364,brush 386,sep 406,undo 425,dd 448,redo 469,dd 492,sep 502,find 524,abc 556,pilcrow 588,sep 608,table 628,dd 651,picture 674,textbox 707,sep 727,field 746,dd 769,omega 790,dd 813,sep 822,link 844,footnote 877,endnote 911,bookmark 943,crossref 976,sep 995,comment 1017,track 1051,sep 1069,line 1091,diamond 1122,dd 1145,*shapes 1167');
build('formatting', 'comboStyle 88,restyle 189,newstyle 222,sep 241,comboFont 338,comboSize 467,sep 500,bold 521,italic 554,under 586,dd 609,strike 632,sep 651,sup 673,sub 706,sep 725,clear 747,sep 766,color 786,dd 809,hilite 830,dd 853,sep 862,left 884,center 917,right 950,justify 983,sep 1002,bullets 1021,dd 1045,numbers 1066,dd 1089,outline 1110,dd 1133,sep 1142,indent 1164,outdent 1197,sep 1216,spacing 1235,dd 1259,parinc 1283,pardec 1316');
build('sidebar', 'pointer 145,*design 180.5,wizard 214,props 250,*tag 285.5,edit 320,check 355,radio 390,list 427,combobox 460,button 495,imgbutton 530,percent 565,date 599,num 635,pattern 669,clock 705,money 741,aa 776,gridctl 810,navbar 845,imgctl 880,filectl 915,more 962', true, 124);
build('drawing', 'pointer 21,sep 41,line 63,arrow 94,dd 117,curve 138,dd 161,bezier 184,polygon 217,sep 236,rect 258,round 291,square 324,ellipse 357,circle 390,tri 423,rtri 456,sep 475,diamond 495,dd 518,smile 539,dd 562,dbl 583,dd 606,star 627,dd 650,callout 671,dd 694,flow 715,dd 738,sep 747,callout2 769,sep 788,textbox 810,fontwork 843,sep 862,points 884,extrude 917');

const CM = 37.79;
let h = '<path fill="#191919" d="M27 4H480V21H27ZM481 5H1871V20H481Z"/>', ticks = '', nums = '';
for (let i = 0; i <= 48; i++) {
  const x = Math.round(26.2 + i * CM), m = Math.round(26.2 + (i + .5) * CM);
  ticks += `M${m + .5} 10v5`;
  if (i) { ticks += `M${x + .5} 4v2M${x + .5} 19v2`; nums += `<text class="ruler-num" x="${x}" y="15.500">${i}</text>`; }
}
document.getElementById('rulerH').innerHTML = h + `<path stroke="#fff" d="${ticks}"/>` + nums;
let v = '<path fill="#191919" d="M4 1H21V51H4ZM5 52H20V819H5Z"/>';
ticks = ''; nums = '';
for (let i = 0; i <= 21; i++) {
  const y = Math.round(i * CM), m = Math.round((i + .5) * CM);
  ticks += `M9 ${m + .5}h5`;
  if (i) { ticks += `M4 ${y + .5}h2M19 ${y + .5}h2`; nums += `<text class="ruler-num" transform="translate(16 ${y}) rotate(-90)">${i}</text>`; }
}
document.getElementById('rulerV').innerHTML = v + `<path stroke="#fff" d="${ticks}"/>` + nums;

let d = '';
for (let i = 0; i <= 48; i++) for (let j = 0; j <= 130; j++) d += `M${Math.round(i * CM + .2)} ${Math.round(j * CM / 6)}.500h1`;
for (let j = 0; j <= 21; j++) for (let i = 0; i <= 293; i++) d += `M${Math.round(i * CM / 6 + .2)} ${Math.round(j * CM)}.500h1`;
document.getElementById('dots').setAttribute('d', d);

let hs = '<path fill="#657e8b" d="M0 0H8V8H0ZM0 813H8V821H0ZM1837 0H1846V8H1837ZM1837 813H1846V821H1837Z"/>';
for (const [x, y] of [[1, 0], [227, 0], [454, 0], [1, 26], [454, 26], [1, 51], [227, 51], [454, 51]])
  hs += `<rect x="${x - 3.5}" y="${y - 3.5}" width="8" height="8" fill="#294d63" stroke="#fff"/>`;
document.getElementById('handles').innerHTML = hs;
```
